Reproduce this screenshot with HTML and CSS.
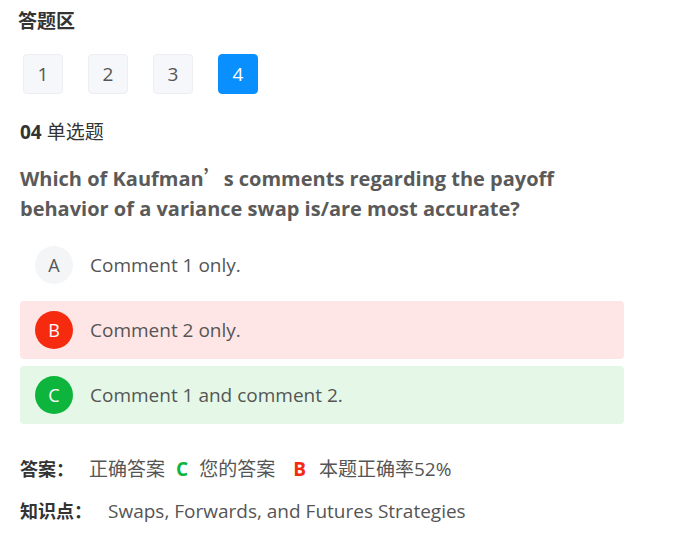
FILE: index.html
```html
<!DOCTYPE html>
<html lang="zh-CN">
<head>
    <meta charset="UTF-8">
    <meta name="viewport" content="width=device-width, initial-scale=1.0">
    <title>答题区</title>
    <link rel="stylesheet" href="styles.css">
</head>
<body>
    <div class="container">
        <h2 class="title">答题区</h2>
        <div class="nums">
            <span class="num">1</span>
            <span class="num">2</span>
            <span class="num">3</span>
            <span class="num active">4</span>
        </div>

        <div class="qtype"><strong>04</strong> 单选题</div>
        <div class="question">Which of Kaufman<span class="cjk">’</span>s comments regarding the payoff behavior of a variance swap is/are most accurate?</div>

        <div class="options">
            <div class="option">
                <span class="letter">A</span>
                <span class="text">Comment 1 only.</span>
            </div>
            <div class="option wrong">
                <span class="letter">B</span>
                <span class="text">Comment 2 only.</span>
            </div>
            <div class="option right">
                <span class="letter">C</span>
                <span class="text">Comment 1 and comment 2.</span>
            </div>
        </div>

        <div class="info">
            <span class="label">答案：</span>
            <span class="val">正确答案</span>
            <b class="mark green">C</b>
            <span class="val">您的答案</span>
            <b class="mark red">B</b>
            <span class="val">本题正确率52%</span>
        </div>
        <div class="info">
            <span class="label wide">知识点：</span>
            <span class="val">Swaps, Forwards, and Futures Strategies</span>
        </div>
    </div>
</body>
</html>
```

FILE: styles.css
```css
body {
    margin: 0;
    font-family: "Open Sans", "Noto Sans CJK SC", sans-serif;
    color: #333;
    background: #fff;
}

.container {
    width: 604px;
    padding: 8px 0 0 20px;
}

.cjk {
    font-family: "Noto Sans CJK SC", sans-serif;
}

.title {
    font-size: 19px;
    font-weight: bold;
    margin: 0 0 0 -2px;
    line-height: 26px;
}

.nums {
    display: flex;
    gap: 25px;
    margin: 20px 0 0 3px;
}

.num {
    width: 38px;
    height: 38px;
    border: 1px solid #eceef2;
    border-radius: 4px;
    background: #f5f7fa;
    color: #555;
    font-size: 19px;
    display: flex;
    align-items: center;
    justify-content: center;
}

.num.active {
    background: #0a8fff;
    border-color: #0a8fff;
    color: #fff;
}

.qtype {
    margin-top: 25px;
    font-size: 19px;
    line-height: 26px;
    color: #333;
}

.question {
    margin-top: 18px;
    font-size: 20px;
    font-weight: bold;
    line-height: 30px;
    color: #5a5a5a;
}

.options {
    margin-top: 12px;
    display: flex;
    flex-direction: column;
    gap: 7px;
}

.option {
    height: 58px;
    display: flex;
    align-items: center;
    padding-left: 15px;
    border-radius: 4px;
}

.letter {
    width: 38px;
    height: 38px;
    border-radius: 50%;
    background: #f4f5f7;
    color: #555;
    font-size: 18px;
    display: flex;
    align-items: center;
    justify-content: center;
}

.text {
    margin-left: 17px;
    font-size: 19px;
    color: #555;
}

.wrong {
    background: #ffe6e6;
}

.wrong .letter {
    background: #f52a0f;
    color: #fff;
}

.right {
    background: #e5f8e8;
}

.right .letter {
    background: #0db53d;
    color: #fff;
}

.info {
    display: flex;
    align-items: baseline;
    font-size: 19px;
    line-height: 26px;
    color: #555;
}

.options + .info {
    margin-top: 32px;
}

.info + .info {
    margin-top: 16px;
}

.label {
    font-weight: bold;
    color: #333;
    width: 69px;
    font-size: 18px;
}

.label.wide {
    width: 88px;
}

.mark {
    font-size: 19px;
    margin: 0 11px;
}

.mark.red {
    margin: 0 13px 0 18px;
}

.green {
    color: #0db53d;
}

.red {
    color: #f52a0f;
}
```
